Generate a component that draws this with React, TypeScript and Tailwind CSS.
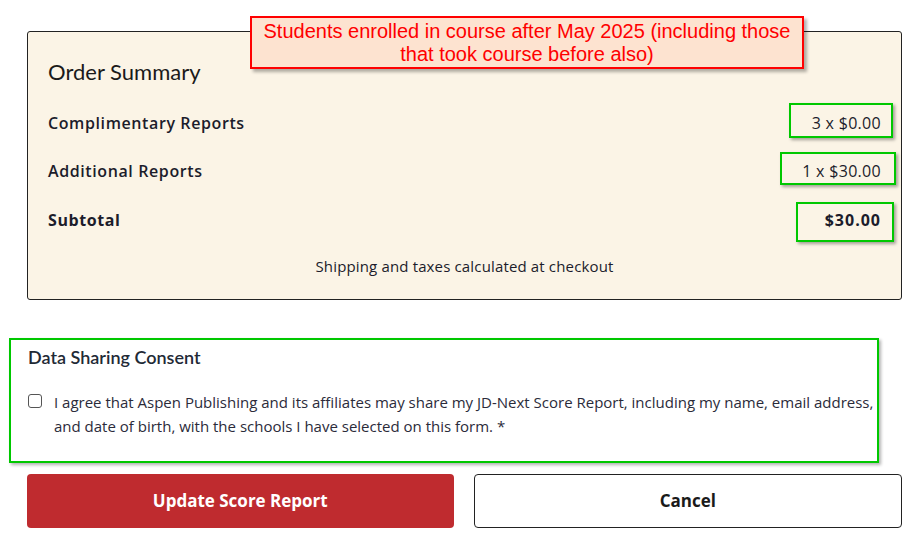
import React from "react";

const body = { fontFamily: '"Open Sans", "DejaVu Sans", sans-serif' };
const head = { fontFamily: 'Lato, "Open Sans", sans-serif' };

function GreenBox({ l, r, t, b }: { l: number; r: number; t: number; b: number }) {
  return (
    <span
      className="pointer-events-none absolute border-2 border-[#00c800] shadow-[2px_2px_3px_rgba(0,0,0,0.35)]"
      style={{ left: -l, right: -r, top: -t, bottom: -b }}
    />
  );
}

export default function App() {
  return (
    <div className="relative h-[540px] w-[921px] overflow-hidden bg-white text-[#1c1c2b]" style={body}>
      {/* Order summary */}
      <div className="ml-[27px] mt-[31px] flex h-[269px] w-[875px] flex-col rounded-[3px] border border-[#222] bg-[#fbf4e6] pl-[20px] pr-[20px]">
        <h2 className="mt-[26px] text-[22px] leading-[28px] text-[#1a1a1a]" style={head}>
          Order Summary
        </h2>
        <div className="mt-[27px] flex h-[20px] items-center justify-between">
          <span className="text-[16px] font-semibold tracking-[0.6px]">Complimentary Reports</span>
          <span className="relative text-[16px] leading-[20px] tracking-[0.3px]">
            3 x $0.00
            <GreenBox l={23} r={12} t={10} b={5} />
          </span>
        </div>
        <div className="mt-[28px] flex h-[20px] items-center justify-between">
          <span className="text-[16px] font-semibold tracking-[0.6px]">Additional Reports</span>
          <span className="relative text-[16px] leading-[20px] tracking-[0.3px]">
            1 x $30.00
            <GreenBox l={22} r={15} t={9} b={4} />
          </span>
        </div>
        <div className="mt-[29px] flex h-[20px] items-center justify-between">
          <span className="text-[16px] font-bold tracking-[0.6px]">Subtotal</span>
          <span className="relative text-[16px] font-bold leading-[20px] tracking-[1px]">
            $30.00
            <GreenBox l={29} r={13} t={8} b={12} />
          </span>
        </div>
        <p className="mt-[26px] text-center text-[15px] leading-[20px] tracking-[0.15px]">Shipping and taxes calculated at checkout</p>
      </div>

      {/* Annotation */}
      <div
        className="absolute left-[250px] top-[16px] flex h-[53px] w-[554px] flex-col items-center justify-center border-2 border-[#ff0000] bg-[#fde3d0] text-center text-[20px] leading-[23px] text-[#ff0000] shadow-[3px_3px_3px_rgba(0,0,0,0.3)]"
        style={{ fontFamily: '"Liberation Sans", Arial, sans-serif' }}
      >
        <span>Students enrolled in course after May 2025 (including those</span>
        <span>that took course before also)</span>
      </div>

      {/* Consent */}
      <div className="ml-[9px] mt-[38px] h-[125px] w-[870px] border-2 border-[#00c800] pl-[17px] pt-[5px] shadow-[2px_2px_3px_rgba(0,0,0,0.3)]">
        <h3 className="text-[18px] font-semibold leading-[24px] text-[#1f2a36]" style={head}>
          Data Sharing Consent
        </h3>
        <div className="mt-[21px] flex items-start">
          <span className="mt-[4px] block h-[14px] w-[14px] shrink-0 rounded-[3px] border border-[#555] bg-white" />
          <p className="ml-[12px] w-[836px] text-[15px] leading-[24px] text-[#2b2b3a]">
            I agree that Aspen Publishing and its affiliates may share my JD-Next Score Report, including my name, email address, and date of birth, with the schools I have selected on this form. *
          </p>
        </div>
      </div>

      {/* Buttons */}
      <div className="ml-[27px] mt-[11px] flex w-[875px] gap-[20px]">
        <button className="flex h-[54px] flex-1 items-center justify-center rounded-[4px] bg-[#bf2b2f] text-[17px] font-bold text-white">
          Update Score Report
        </button>
        <button className="flex h-[54px] flex-1 items-center justify-center rounded-[4px] border border-[#222] bg-white text-[17px] font-bold text-[#1a1a1a]">
          Cancel
        </button>
      </div>
    </div>
  );
}
